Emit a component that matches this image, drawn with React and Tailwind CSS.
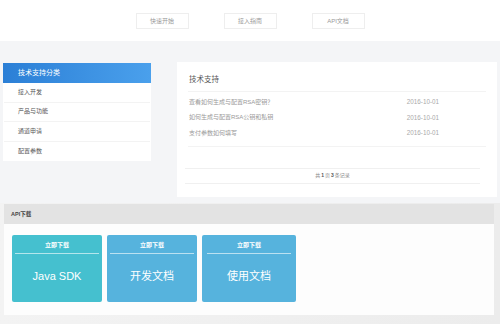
import React from 'react';

const font = { fontFamily: '"Liberation Sans", "Noto Sans CJK SC", sans-serif' };

const navItems = ['快速开始', '接入指南', 'API文档'];
const categories = ['接入开发', '产品与功能', '通道申请', '配置参数'];
const articles = [
  { title: '查看如何生成与配置RSA密钥？', date: '2016-10-01' },
  { title: '如何生成与配置RSA公钥和私钥', date: '2016-10-01' },
  { title: '支付参数如何填写', date: '2016-10-01' },
];
const downloads = [
  { label: 'Java SDK', color: 'bg-[#45c0cf]' },
  { label: '开发文档', color: 'bg-[#56b3dd]' },
  { label: '使用文档', color: 'bg-[#56b3dd]' },
];

export default function App() {
  return (
    <div className="w-[500px] h-[324px] overflow-hidden bg-[#f4f5f7] text-[#666]" style={font}>
      {/* top nav */}
      <div className="h-[41px] bg-white flex justify-center items-start pt-[13px] gap-[35px]">
        {navItems.map((n) => (
          <div key={n} className="w-[53px] h-[16px] border border-[#eeeeee] flex items-center justify-center text-[6px] text-[#999]">
            {n}
          </div>
        ))}
      </div>

      {/* support */}
      <div className="flex items-start pt-[21px] pl-[3px]">
        <div className="w-[148px] bg-white mt-[1px]">
          <div className="h-[20px] bg-gradient-to-r from-[#2b7fd6] to-[#4aa0ec] text-white text-[7px] flex items-center pl-[15px]">
            技术支持分类
          </div>
          {categories.map((c, i) => (
            <div key={c} className={`h-[19.5px] mx-[1px] flex items-center pl-[14px] text-[6px] text-[#555] ${i < categories.length - 1 ? 'border-b border-[#f3f3f3]' : ''}`}>
              {c}
            </div>
          ))}
        </div>

        <div className="ml-[26px] w-[320px] h-[135px] bg-white px-[11px] pt-[12px]">
          <div className="text-[7.5px] text-[#555] pl-[1px] pb-[6px] border-b border-[#f3f3f3]">技术支持</div>
          <div className="pt-[2px] pb-[5px] border-b border-[#f3f3f3]">
            {articles.map((a) => (
              <div key={a.title} className="h-[15.5px] flex items-center justify-between pl-[1px] pr-[47px] text-[6px] text-[#999]">
                <span>{a.title}</span>
                <span className="text-[6.3px] text-[#aaa]">{a.date}</span>
              </div>
            ))}
          </div>
          <div className="mt-[21px] -ml-[3px] mr-[6px] h-[16px] border-t border-b border-[#f0f0f0] flex items-center justify-center text-[5px] text-[#888]">
            共 <b className="text-[#555] mx-[1px]">1</b>页<b className="text-[#555] mx-[1px]">3</b>条记录
          </div>
        </div>
      </div>

      {/* api download */}
      <div className="mt-[6px] pt-[1px] h-[125px] bg-gradient-to-r from-[#f3f3f3] to-[#ececec]">
        <div className="ml-[4px] w-[490px]">
          <div className="h-[20px] bg-[#e3e3e3] flex items-center pl-[7px] text-[5.5px] font-bold text-[#444]">API下载</div>
          <div className="h-[91px] bg-[#fdfdfd] flex gap-[5px] pl-[8px] pt-[11px]">
            {downloads.map((d, i) => (
              <div key={d.label} className={`${i === 2 ? 'w-[94px]' : 'w-[90px]'} h-[67px] rounded-[2px] ${d.color} text-white flex flex-col items-center`}>
                <div className="h-[19px] w-[84px] flex items-center justify-center text-[6px] font-bold border-b border-white/60" style={{ fontFamily: '"Noto Sans CJK SC", serif' }}>
                  立即下载
                </div>
                <div className="flex-1 flex items-center justify-center text-[11px] pb-[3px]">{d.label}</div>
              </div>
            ))}
          </div>
        </div>
      </div>
    </div>
  );
}
